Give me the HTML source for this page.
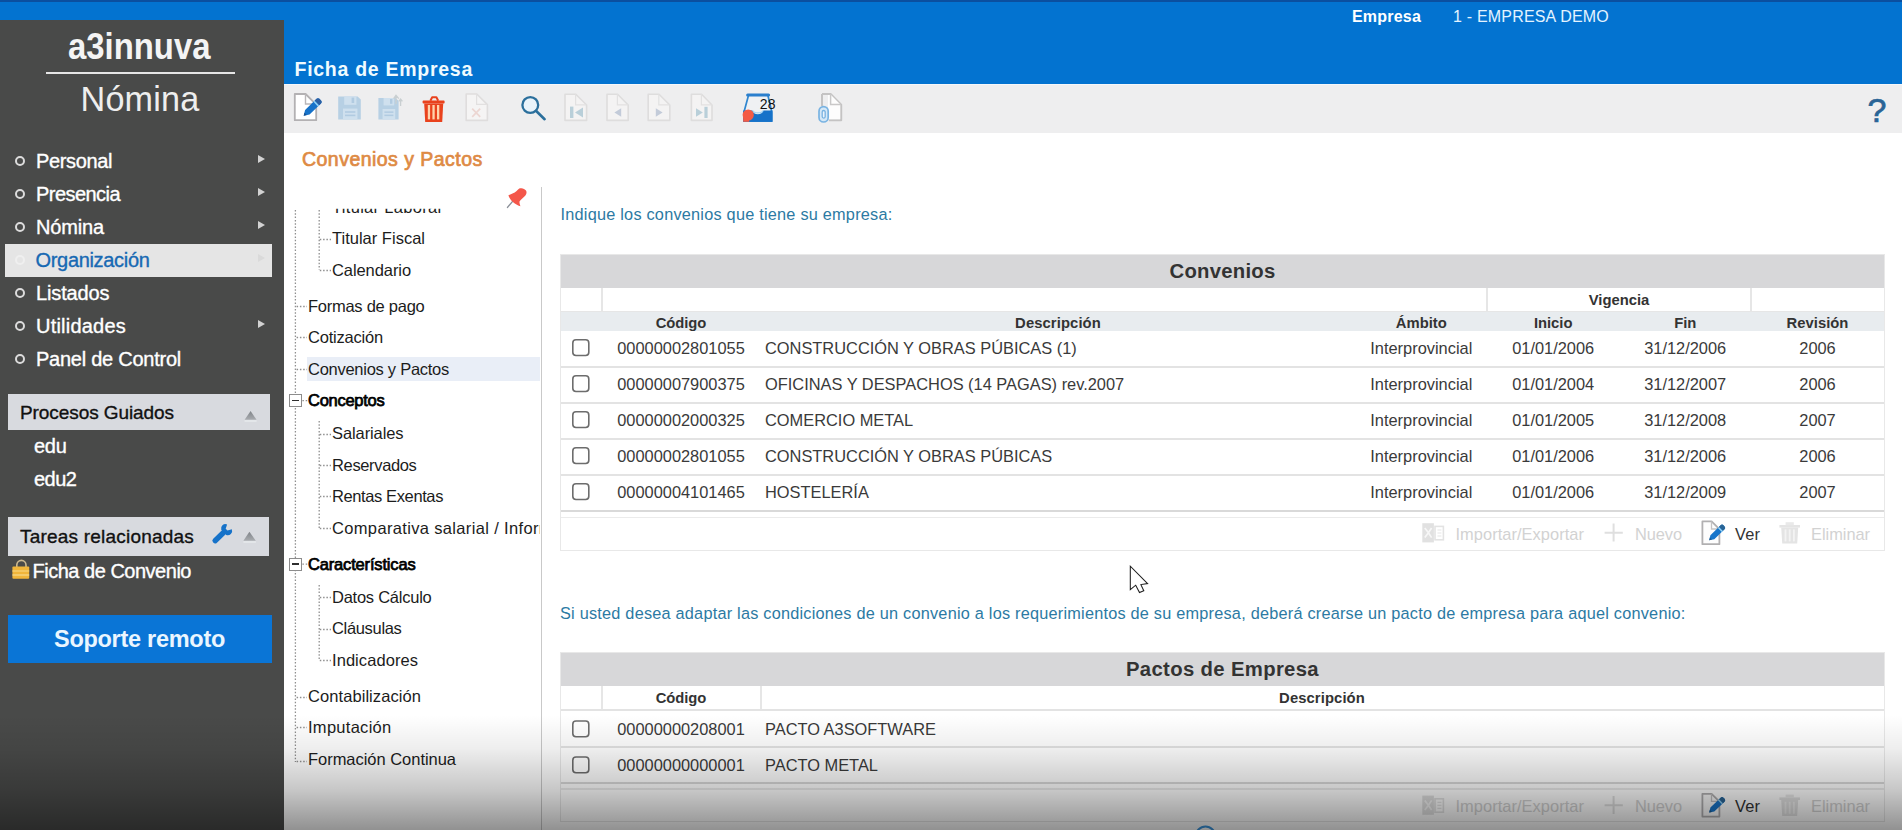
<!DOCTYPE html>
<html lang="es">
<head>
<meta charset="utf-8">
<title>a3innuva Nómina - Ficha de Empresa</title>
<style>
html,body{margin:0;padding:0;background:#fff;}
body{width:1902px;height:830px;overflow:hidden;font-family:"Liberation Sans",sans-serif;}
#app{position:relative;width:1902px;height:830px;overflow:hidden;background:#fff;}
.a{position:absolute;}
.t{position:absolute;white-space:nowrap;margin:0;padding:0;}
.med{-webkit-text-stroke:0.35px currentColor;}
.med2{-webkit-text-stroke:0.7px currentColor;}
.sb{-webkit-text-stroke:0.75px currentColor;}
svg{position:absolute;overflow:visible;}
.row{position:absolute;left:561px;width:1323px;height:2px;background:#e3e3e3;}
.bul{position:absolute;left:15px;width:6.4px;height:6.4px;border:2px solid #dcdcdc;border-radius:50%;}
.arr{position:absolute;left:258.2px;width:0;height:0;border-top:4.6px solid transparent;border-bottom:4.6px solid transparent;border-left:7px solid #d2d2d2;}
.exp{position:absolute;left:289.2px;width:10.4px;height:10.8px;border:1.1px solid #8c8c8c;background:#fff;}
.exp:after{content:"";position:absolute;left:1.4px;top:4.4px;width:7.6px;height:1.9px;background:#2e2e2e;}
</style>
</head>
<body>
<div id="app">
<!-- top blue header -->
<div class="a" style="left:0;top:0;width:1902px;height:83.6px;background:#0373d0;"></div>
<div class="a" style="left:0;top:0;width:1902px;height:2px;background:#0b4f9f;"></div>
<!-- sidebar -->
<div class="a" style="left:0;top:19.5px;width:283.6px;height:811px;background:#494a49;"></div>
<div class="a" style="left:46px;top:71.5px;width:189px;height:2px;background:#e6e6e6;"></div>
<!-- menu highlight -->
<div class="a" style="left:5px;top:244px;width:267.4px;height:33px;background:#e5e5e5;"></div>
<!-- bullets -->
<div class="bul" style="top:156.0px"></div>
<div class="bul" style="top:189.0px"></div>
<div class="bul" style="top:222.0px"></div>
<div class="bul" style="top:255.0px;border-color:#efefef"></div>
<div class="bul" style="top:288.0px"></div>
<div class="bul" style="top:321.0px"></div>
<div class="bul" style="top:354.0px"></div>
<!-- submenu arrows -->
<div class="arr" style="top:155.2px"></div>
<div class="arr" style="top:188.2px"></div>
<div class="arr" style="top:221.2px"></div>
<div class="arr" style="top:254.2px;border-left-color:#dadada"></div>
<div class="arr" style="top:320.2px"></div>
<!-- section headers -->
<div class="a" style="left:8px;top:394px;width:262px;height:35.8px;background:#d8dadf;"></div>
<div class="a" style="left:8px;top:517px;width:261.2px;height:38.8px;background:#d8dadf;"></div>
<!-- support button -->
<div class="a" style="left:7.6px;top:615px;width:264.4px;height:48.3px;background:#0a75d6;"></div>
<!-- toolbar -->
<div class="a" style="left:283.6px;top:83.6px;width:1619px;height:49.2px;background:#eeeeef;"></div>
<div class="a" style="left:283.6px;top:83.6px;width:1619px;height:1.6px;background:#f5f7fa;"></div>
<!-- tree panel separator -->
<div class="a" style="left:541px;top:187px;width:1px;height:643px;background:#c9c9c9;"></div>
<!-- tree highlight -->
<div class="a" style="left:307px;top:357px;width:233px;height:23.5px;background:#e9eef7;"></div>
<!-- tree dotted lines -->
<svg style="left:0;top:0" width="600" height="830" viewBox="0 0 600 830"><path d="M295.4 210.0 V762.0 M319.2 210.0 V270.0 M319.2 421.0 V528.0 M319.2 585.0 V660.0 M319.8 239.5 H331.0 M319.8 270.5 H331.0 M296.6 306.5 H307.0 M296.6 337.5 H307.0 M296.6 369.5 H307.0 M302.4 400.6 H308 M319.8 434.5 H331.0 M319.8 465.5 H331.0 M319.8 496.5 H331.0 M319.8 528.5 H331.0 M302.4 564.2 H308 M319.8 597.5 H331.0 M319.8 629.5 H331.0 M319.8 660.5 H331.0 M296.6 697.5 H307.0 M296.6 727.5 H307.0 M296.6 761.5 H307.0" fill="none" stroke="#8f8f8f" stroke-width="1.3" stroke-dasharray="1.5 1.8"/></svg>
<div class="exp" style="top:394.2px"></div>
<div class="exp" style="top:557.8px"></div>
<!-- TABLE 1 -->
<div class="a" style="left:560px;top:254px;width:1325px;height:296.5px;border:1px solid #e8e8e8;box-sizing:border-box;background:#fff;"></div>
<div class="a" style="left:561px;top:254.8px;width:1323px;height:32.8px;background:#d7d7d9;"></div>
<div class="a" style="left:561px;top:312.2px;width:1323px;height:18.6px;background:#e8ecef;"></div>
<div class="a" style="left:561px;top:310.7px;width:1323px;height:1.5px;background:#e6e6e6;"></div>
<div class="a" style="left:600.5px;top:287.5px;width:2px;height:23px;background:#e6e6e6;"></div>
<div class="a" style="left:1486px;top:287.5px;width:2px;height:23px;background:#e6e6e6;"></div>
<div class="a" style="left:1750.3px;top:287.5px;width:2px;height:23px;background:#e6e6e6;"></div>
<div class="row" style="top:366.0px"></div>
<div class="row" style="top:402.0px"></div>
<div class="row" style="top:438.0px"></div>
<div class="row" style="top:474.0px"></div>
<div class="row" style="top:510.0px;background:#d9d9d9"></div>
<div class="row" style="top:516.5px;height:1.5px;background:#ebebeb"></div>
<!-- TABLE 2 -->
<div class="a" style="left:560px;top:652px;width:1325px;height:170px;border:1px solid #e8e8e8;box-sizing:border-box;background:#fff;"></div>
<div class="a" style="left:561px;top:652.8px;width:1323px;height:32.8px;background:#d7d7d9;"></div>
<div class="a" style="left:600.5px;top:685.5px;width:2px;height:24px;background:#e6e6e6;"></div>
<div class="a" style="left:759.5px;top:685.5px;width:2px;height:24px;background:#e6e6e6;"></div>
<div class="row" style="top:709.4px;"></div>
<div class="row" style="top:745.5px"></div>
<div class="row" style="top:781.5px;background:#d9d9d9"></div>
<div class="row" style="top:788px;height:1.5px;background:#ebebeb"></div>
<!-- ===== toolbar icons ===== -->
<svg style="left:0;top:0" width="1902" height="140" viewBox="0 0 1902 140">
<!-- edit: doc + pencil -->
<path d="M294.8 94 H305.6 L316.2 104.6 V120.2 H294.8 Z" fill="#fff" stroke="#b3b1b3" stroke-width="1.8" stroke-linejoin="round"/>
<path d="M305.5 94 V104 H315.6" fill="none" stroke="#b9b7b9" stroke-width="1.4"/>
<g transform="translate(303.7 115.7) rotate(-44)">
<path d="M0 0 L5 -3.2 H21 a2 2 0 0 1 2 2 V1.2 a2 2 0 0 1 -2 2 H5 Z" fill="#1672c9"/>
<path d="M18.4 -3.2 H21 a2 2 0 0 1 2 2 V1.2 a2 2 0 0 1 -2 2 H18.4 Z" fill="#2b5fa3"/>
<rect x="16.6" y="-3.2" width="1.6" height="6.4" fill="#8fd0f5"/>
<path d="M0 0 L2.6 -1.7 V1.7 Z" fill="#174f8e"/>
</g>
<!-- save (disabled) -->
<g fill="#b7d0e4">
<path d="M338.2 96.4 H357.6 L360.8 99.6 V119.4 H338.2 Z"/>
</g>
<rect x="344.2" y="96.4" width="12.2" height="8.4" fill="#cfe0ee"/>
<rect x="351.6" y="97.6" width="2.6" height="5.4" fill="#b1cbe1"/>
<rect x="343" y="108.6" width="14.4" height="10.8" fill="#cfe0ee"/>
<rect x="345" y="111.2" width="10.4" height="1.6" fill="#b1cbe1"/>
<rect x="345" y="114.6" width="10.4" height="1.6" fill="#b1cbe1"/>
<!-- save all (disabled) -->
<path d="M378.4 98 H395.6 L398.6 101 V119.6 H378.4 Z" fill="#b7d0e4"/>
<rect x="383.6" y="98" width="10.6" height="7.4" fill="#cfe0ee"/>
<rect x="390" y="99" width="2.4" height="4.8" fill="#b1cbe1"/>
<rect x="382.6" y="109" width="12.6" height="10.6" fill="#cfe0ee"/>
<rect x="384.4" y="111.4" width="9" height="1.5" fill="#b1cbe1"/>
<rect x="384.4" y="114.6" width="9" height="1.5" fill="#b1cbe1"/>
<path d="M396 104 V96.5 M393.6 98.6 L396 95.4 L398.8 98.6 M400.6 106 V99.5 M398.8 101.4 L400.6 99 L402.4 101.4" fill="none" stroke="#c9cfd1" stroke-width="1.3"/>
<!-- trash (red) -->
<path d="M424.2 103.4 H443.2 L442.2 122 H425.2 Z" fill="#e9421d"/>
<rect x="422.6" y="100.6" width="22" height="3" rx="0.8" fill="#e9421d"/>
<path d="M430.4 100.8 L432.2 97.2 H436.4 L438.2 100.8" fill="none" stroke="#e9421d" stroke-width="2" stroke-linejoin="round"/>
<rect x="427.8" y="105" width="2.3" height="14.4" fill="#ffd3ac"/>
<rect x="432.4" y="105" width="2.3" height="14.4" fill="#ffd3ac"/>
<rect x="437" y="105" width="2.3" height="14.4" fill="#ffd3ac"/>
<!-- doc with x (disabled) -->
<path d="M466.2 94 H476.8 L487.4 104.6 V120.4 H466.2 Z" fill="#f5f4f4" stroke="#dfdddd" stroke-width="1.6" stroke-linejoin="round"/>
<path d="M476.6 94 V104.4 H487" fill="none" stroke="#e2e0e0" stroke-width="1.2"/>
<path d="M472.2 108.6 L480.2 116.8 M480.2 108.6 L472.2 116.8" stroke="#ecd6d2" stroke-width="1.7" fill="none"/>
<!-- search -->
<circle cx="530.3" cy="105" r="7.9" fill="#e9f3fa" stroke="#2b6f9c" stroke-width="2.3"/>
<path d="M536.2 111 L544.6 119.2" stroke="#2b6f9c" stroke-width="2.6" stroke-linecap="round"/>
<!-- nav docs (disabled) -->
<g fill="#f4f3f3" stroke="#dedddd" stroke-width="1.6" stroke-linejoin="round">
<path d="M565 94.2 H575.8 L586.6 105 V120.4 H565 Z"/>
<path d="M607 94.2 H617.6 L628.2 105 V120.4 H607 Z"/>
<path d="M648.2 94.2 H659 L669.8 105 V120.4 H648.2 Z"/>
<path d="M691.4 94.2 H701.6 L712 105 V120.4 H691.4 Z"/>
</g>
<g fill="none" stroke="#e2e1e1" stroke-width="1.2">
<path d="M575.6 94.2 V104.8 H586.4"/><path d="M617.4 94.2 V104.8 H628"/><path d="M658.8 94.2 V104.8 H669.6"/><path d="M701.4 94.2 V104.8 H711.8"/>
</g>
<g fill="#b9cfd9">
<rect x="570" y="106.6" width="3.4" height="11.4"/><path d="M583 107.6 V117.4 L575 112.5 Z"/>
<path d="M621.2 108.2 V116.8 L614.4 112.5 Z" fill="#c3cbd9"/>
<path d="M655.8 108.2 V116.8 L662.6 112.5 Z" fill="#c3cbd9"/>
<path d="M696 108.2 V116.8 L702.8 112.5 Z"/><rect x="704.4" y="106.8" width="3.2" height="11.2"/>
</g>
<!-- inbox -->
<path d="M748.6 95 H767.8 L771.8 112 V121.2 H744 V112 Z" fill="#eff1f3" stroke="#2f86cf" stroke-width="1.7" stroke-linejoin="round"/>
<path d="M747.6 95 H768.6" stroke="#2a7fcd" stroke-width="3" stroke-linecap="round"/>
<path d="M743.2 110.6 H752.4 C752.8 115.4 762.8 115.4 763.4 110.6 H772.4 V121.8 H743.2 Z" fill="#1672c9"/>
<path d="M752.6 110.4 C754 113.6 761.6 113.6 763.2 110.4" fill="none" stroke="#9fd2f4" stroke-width="1.2"/>
<circle cx="748.2" cy="115" r="5.6" fill="#f45b45"/>
<rect x="743.2" y="115" width="6" height="6.8" fill="#f45b45"/>
<!-- attachment doc -->
<path d="M822 94 H830.6 L841.2 104.6 V120.2 H829" fill="none" stroke="#c4c3c3" stroke-width="2" stroke-linejoin="round"/>
<path d="M822 94 V106" fill="none" stroke="#c4c3c3" stroke-width="2"/>
<path d="M831 95 L840.2 104.2 V119.2 H828 V95 Z" fill="#fdfdfd"/>
<path d="M830.6 94 V104.6 H841" fill="none" stroke="#c9c8c8" stroke-width="1.5"/>
<path d="M819 111.2 a4.6 4.6 0 0 1 9.2 0 V117.4 a4.6 4.6 0 0 1 -9.2 0 Z" fill="#d5e8f7" stroke="#79b3e2" stroke-width="1.7"/>
<path d="M822.2 112 a1.5 1.5 0 0 1 3 0 V116.6 a1.5 1.5 0 0 1 -3 0 Z" fill="#eaf3fb" stroke="#79b3e2" stroke-width="1.3"/>
</svg>
<!-- ===== small icons ===== -->
<svg style="left:0;top:0" width="1902" height="830" viewBox="0 0 1902 830">
<defs>
<linearGradient id="tg" x1="0" y1="0" x2="0" y2="1"><stop offset="0" stop-color="#7f8388"/><stop offset="1" stop-color="#a9acb0"/></linearGradient>
</defs>
<!-- collapse arrows on section headers -->
<path d="M250.6 411 L256.6 419.8 H244.6 Z" fill="url(#tg)"/>
<path d="M244.6 421 H256.6" stroke="#e9ebee" stroke-width="1.4"/>
<path d="M249.4 531.8 L255.8 540.8 H243.4 Z" fill="url(#tg)"/>
<path d="M243.4 542 H255.8" stroke="#e9ebee" stroke-width="1.4"/>
<!-- wrench -->
<g transform="translate(214.8 541) rotate(-44)">
<rect x="-2.2" y="-2.7" width="17" height="5.4" rx="2.6" fill="#1672c9"/>
<path d="M12.4 -3.6 a4.4 4.4 0 0 1 8 0.2 L16.4 -1.3 V1.3 L20.4 3.4 a4.4 4.4 0 0 1 -8 0.2 Z" fill="#1672c9"/>
</g>
<!-- lock icon -->
<path d="M16.8 567 V565 a4.6 4.6 0 0 1 9.2 0 V567" fill="none" stroke="#cdb98f" stroke-width="1.6"/>
<rect x="12.4" y="566.4" width="16.8" height="12.4" rx="1" fill="#f0b53a"/>
<rect x="12.4" y="570.4" width="16.8" height="1.2" fill="#f7d27a"/>
<rect x="12.4" y="574.4" width="16.8" height="1.2" fill="#f7d98c"/>
<!-- pin -->
<path d="M507.5 207.4 L512.4 201.6" stroke="#8a8f98" stroke-width="1.4" stroke-linecap="round"/>
<path d="M508.4 195.2 C510.6 194.6 514.4 193 516.6 191 C518 189.6 518.8 188.6 520.2 188.3 C522.4 187.8 524.8 188.8 526 190.6 C527 192.2 526.6 194 525.4 195.4 C523.6 197.6 520.8 199.4 519.6 201.2 C519.2 203 520 204.6 520.4 206.2 C517.6 205.6 514.2 203.6 512.4 201.6 C510.6 199.8 509 197.4 508.4 195.2 Z" fill="#f4574a"/>
<!-- table toolbar icons (two toolbars: dy=0 and dy=272.4) -->
<g>
<rect x="1422.3" y="523.2" width="11.6" height="19.2" fill="#e1e1e1"/>
<path d="M1424.8 528 L1428.4 532.8 L1424.8 537.6 M1431.6 528 L1428.4 532.8 L1431.6 537.6" stroke="#f7f7f7" stroke-width="1.7" fill="none"/>
<rect x="1435" y="526.4" width="8.4" height="13.4" fill="none" stroke="#e3e3e3" stroke-width="1.6"/>
<path d="M1437.4 530 H1441.4 M1437.4 533 H1441.4 M1437.4 536 H1441.4" stroke="#e6e6e6" stroke-width="1.2"/>
<path d="M1604.6 532.8 H1622.8 M1613.6 523.6 V541.6" stroke="#dfdfdf" stroke-width="2"/>
<path d="M1702.4 521.4 H1711.6 L1719.4 529.2 V544.2 H1702.4 Z" fill="#fdfdfd" stroke="#b1b0b1" stroke-width="1.8" stroke-linejoin="round"/>
<path d="M1711.5 521.4 V529 H1719" fill="none" stroke="#c4c3c4" stroke-width="1.3"/>
<g transform="translate(1709.2 540.2) rotate(-44)">
<path d="M0 0 L4.4 -2.8 H18.6 a2 2 0 0 1 2 2 V0.8 a2 2 0 0 1 -2 2 H4.4 Z" fill="#1876cb"/>
<path d="M16.4 -2.8 H18.6 a2 2 0 0 1 2 2 V0.8 a2 2 0 0 1 -2 2 H16.4 Z" fill="#2a6596"/>
<rect x="14.8" y="-2.8" width="1.4" height="5.6" fill="#9ad6f6"/>
<path d="M0 0 L2.4 -1.5 V1.5 Z" fill="#1c5a90"/>
</g>
<path d="M1781.2 527.6 H1798.2 L1797.2 543.6 H1782.2 Z" fill="#e4e4e4"/>
<rect x="1779.4" y="525" width="20.6" height="2.6" fill="#e4e4e4"/>
<rect x="1785.6" y="522.2" width="8.2" height="3" fill="#e9e9e9"/>
<rect x="1784.6" y="529.4" width="1.8" height="12" fill="#f3f3f3"/>
<rect x="1788.8" y="529.4" width="1.8" height="12" fill="#f3f3f3"/>
<rect x="1793" y="529.4" width="1.8" height="12" fill="#f3f3f3"/>
</g>
<g transform="translate(0 272.4)">
<rect x="1422.3" y="523.2" width="11.6" height="19.2" fill="#e1e1e1"/>
<path d="M1424.8 528 L1428.4 532.8 L1424.8 537.6 M1431.6 528 L1428.4 532.8 L1431.6 537.6" stroke="#f7f7f7" stroke-width="1.7" fill="none"/>
<rect x="1435" y="526.4" width="8.4" height="13.4" fill="none" stroke="#e3e3e3" stroke-width="1.6"/>
<path d="M1437.4 530 H1441.4 M1437.4 533 H1441.4 M1437.4 536 H1441.4" stroke="#e6e6e6" stroke-width="1.2"/>
<path d="M1604.6 532.8 H1622.8 M1613.6 523.6 V541.6" stroke="#dfdfdf" stroke-width="2"/>
<path d="M1702.4 521.4 H1711.6 L1719.4 529.2 V544.2 H1702.4 Z" fill="#fdfdfd" stroke="#b1b0b1" stroke-width="1.8" stroke-linejoin="round"/>
<path d="M1711.5 521.4 V529 H1719" fill="none" stroke="#c4c3c4" stroke-width="1.3"/>
<g transform="translate(1709.2 540.2) rotate(-44)">
<path d="M0 0 L4.4 -2.8 H18.6 a2 2 0 0 1 2 2 V0.8 a2 2 0 0 1 -2 2 H4.4 Z" fill="#1876cb"/>
<path d="M16.4 -2.8 H18.6 a2 2 0 0 1 2 2 V0.8 a2 2 0 0 1 -2 2 H16.4 Z" fill="#2a6596"/>
<rect x="14.8" y="-2.8" width="1.4" height="5.6" fill="#9ad6f6"/>
<path d="M0 0 L2.4 -1.5 V1.5 Z" fill="#1c5a90"/>
</g>
<path d="M1781.2 527.6 H1798.2 L1797.2 543.6 H1782.2 Z" fill="#e4e4e4"/>
<rect x="1779.4" y="525" width="20.6" height="2.6" fill="#e4e4e4"/>
<rect x="1785.6" y="522.2" width="8.2" height="3" fill="#e9e9e9"/>
<rect x="1784.6" y="529.4" width="1.8" height="12" fill="#f3f3f3"/>
<rect x="1788.8" y="529.4" width="1.8" height="12" fill="#f3f3f3"/>
<rect x="1793" y="529.4" width="1.8" height="12" fill="#f3f3f3"/>
</g>
<!-- checkboxes -->
<g fill="#fff" stroke="#6d6d6d" stroke-width="1.6"><rect x="572.8" y="339.8" width="16" height="15.7" rx="3.2"/><rect x="572.8" y="375.8" width="16" height="15.7" rx="3.2"/><rect x="572.8" y="411.8" width="16" height="15.7" rx="3.2"/><rect x="572.8" y="447.8" width="16" height="15.7" rx="3.2"/><rect x="572.8" y="483.8" width="16" height="15.7" rx="3.2"/><rect x="572.8" y="721.0" width="16" height="15.7" rx="3.2"/><rect x="572.8" y="757.0" width="16" height="15.7" rx="3.2"/></g>
<!-- spinner arc peeking at bottom -->
<circle cx="1205.5" cy="836" r="9.6" fill="none" stroke="#3c97e0" stroke-width="2"/>
</svg>

<!-- text -->
<div class="t " style="top:24.01px;font-size:36px;line-height:45px;color:#f4f4f4;font-weight:bold;transform:scaleX(0.9131);transform-origin:0 0;left:68.00px;">a3innuva</div>
<div class="t " style="top:78.01px;font-size:34.2px;line-height:43px;color:#eeeeee;letter-spacing:0.198px;left:80.50px;">Nómina</div>
<div class="t med" style="top:148.01px;font-size:20px;line-height:26px;color:#ffffff;letter-spacing:-0.367px;left:36.00px;">Personal</div>
<div class="t med" style="top:181.01px;font-size:20px;line-height:26px;color:#ffffff;letter-spacing:-0.549px;left:36.00px;">Presencia</div>
<div class="t med" style="top:214.01px;font-size:20px;line-height:26px;color:#ffffff;letter-spacing:-0.154px;left:36.00px;">Nómina</div>
<div class="t med" style="top:247.01px;font-size:20px;line-height:26px;color:#1769b3;letter-spacing:-0.320px;left:35.50px;">Organización</div>
<div class="t med" style="top:280.01px;font-size:20px;line-height:26px;color:#ffffff;letter-spacing:-0.125px;left:36.00px;">Listados</div>
<div class="t med" style="top:313.01px;font-size:20px;line-height:26px;color:#ffffff;letter-spacing:0.217px;left:36.00px;">Utilidades</div>
<div class="t med" style="top:346.01px;font-size:20px;line-height:26px;color:#ffffff;letter-spacing:-0.249px;left:36.00px;">Panel de Control</div>
<div class="t med" style="top:400.01px;font-size:19px;line-height:25px;color:#111111;letter-spacing:-0.078px;left:20.00px;">Procesos Guiados</div>
<div class="t med" style="top:433.01px;font-size:20px;line-height:26px;color:#ffffff;letter-spacing:-0.292px;left:34.00px;">edu</div>
<div class="t med" style="top:466.01px;font-size:20px;line-height:26px;color:#ffffff;letter-spacing:-0.500px;left:34.00px;">edu2</div>
<div class="t med" style="top:524.00px;font-size:19px;line-height:25px;color:#111111;letter-spacing:0.208px;left:20.00px;">Tareas relacionadas</div>
<div class="t med" style="top:558.01px;font-size:20px;line-height:26px;color:#ffffff;letter-spacing:-0.487px;left:32.50px;">Ficha de Convenio</div>
<div class="t " style="top:624.00px;font-size:23.5px;line-height:30px;color:#eaf6ff;font-weight:bold;letter-spacing:-0.283px;left:54.00px;">Soporte remoto</div>
<div class="t " style="top:57.01px;font-size:19.5px;line-height:25px;color:#f0fbff;font-weight:bold;letter-spacing:0.725px;left:294.50px;">Ficha de Empresa</div>
<div class="t " style="top:6.00px;font-size:16px;line-height:21px;color:#ffffff;font-weight:bold;letter-spacing:0.201px;left:1352.00px;">Empresa</div>
<div class="t " style="top:6.00px;font-size:16px;line-height:21px;color:#e4f3ff;letter-spacing:0.192px;left:1453.00px;">1 - EMPRESA DEMO</div>
<div class="t med2" style="top:89.00px;font-size:34px;line-height:43px;color:#2a6496;left:1867.60px;">?</div>
<div class="t " style="top:95.01px;font-size:14px;line-height:19px;color:#111111;letter-spacing:0.211px;left:759.70px;">28</div>
<div class="t med2" style="top:147.01px;font-size:19.5px;line-height:25px;color:#de8a44;letter-spacing:0.464px;left:302.00px;">Convenios y Pactos</div>
<div class="t " style="top:203.01px;font-size:16.3px;line-height:22px;color:#2c7aa3;letter-spacing:0.227px;left:560.50px;">Indique los convenios que tiene su empresa:</div>
<div class="t " style="top:602.01px;font-size:16.3px;line-height:22px;color:#2c7aa3;letter-spacing:0.222px;left:560.00px;">Si usted desea adaptar las condiciones de un convenio a los requerimientos de su empresa, deberá crearse un pacto de empresa para aquel convenio:</div>
<div class="t " style="top:258.00px;font-size:20.3px;line-height:26px;color:#333333;font-weight:bold;letter-spacing:0.257px;left:922.50px;width:600px;text-align:center;"><span>Convenios</span></div>
<div class="t " style="top:290.00px;font-size:14.8px;line-height:20px;color:#333333;font-weight:bold;letter-spacing:-0.024px;left:1319.00px;width:600px;text-align:center;"><span>Vigencia</span></div>
<div class="t " style="top:313.00px;font-size:14.8px;line-height:20px;color:#333333;font-weight:bold;letter-spacing:-0.034px;left:381.00px;width:600px;text-align:center;"><span>Código</span></div>
<div class="t " style="top:313.00px;font-size:14.8px;line-height:20px;color:#333333;font-weight:bold;letter-spacing:0.100px;left:758.00px;width:600px;text-align:center;"><span>Descripción</span></div>
<div class="t " style="top:313.00px;font-size:14.8px;line-height:20px;color:#333333;font-weight:bold;letter-spacing:0.005px;left:1121.30px;width:600px;text-align:center;"><span>Ámbito</span></div>
<div class="t " style="top:313.00px;font-size:14.8px;line-height:20px;color:#333333;font-weight:bold;letter-spacing:-0.023px;left:1253.20px;width:600px;text-align:center;"><span>Inicio</span></div>
<div class="t " style="top:313.00px;font-size:14.8px;line-height:20px;color:#333333;font-weight:bold;letter-spacing:-0.168px;left:1385.20px;width:600px;text-align:center;"><span>Fin</span></div>
<div class="t " style="top:313.00px;font-size:14.8px;line-height:20px;color:#333333;font-weight:bold;letter-spacing:0.014px;left:1517.50px;width:600px;text-align:center;"><span>Revisión</span></div>
<div class="t " style="top:337.00px;font-size:16.4px;line-height:22px;color:#3a3a3a;left:381.00px;width:600px;text-align:center;"><span>00000002801055</span></div>
<div class="t " style="top:337.00px;font-size:16.4px;line-height:22px;color:#3a3a3a;left:765.00px;">CONSTRUCCIÓN Y OBRAS PÚBICAS (1)</div>
<div class="t " style="top:337.00px;font-size:16.4px;line-height:22px;color:#3a3a3a;left:1121.30px;width:600px;text-align:center;"><span>Interprovincial</span></div>
<div class="t " style="top:337.00px;font-size:16.4px;line-height:22px;color:#3a3a3a;left:1253.20px;width:600px;text-align:center;"><span>01/01/2006</span></div>
<div class="t " style="top:337.00px;font-size:16.4px;line-height:22px;color:#3a3a3a;left:1385.20px;width:600px;text-align:center;"><span>31/12/2006</span></div>
<div class="t " style="top:337.00px;font-size:16.4px;line-height:22px;color:#3a3a3a;left:1517.50px;width:600px;text-align:center;"><span>2006</span></div>
<div class="t " style="top:373.00px;font-size:16.4px;line-height:22px;color:#3a3a3a;left:381.00px;width:600px;text-align:center;"><span>00000007900375</span></div>
<div class="t " style="top:373.00px;font-size:16.4px;line-height:22px;color:#3a3a3a;left:765.00px;">OFICINAS Y DESPACHOS (14 PAGAS) rev.2007</div>
<div class="t " style="top:373.00px;font-size:16.4px;line-height:22px;color:#3a3a3a;left:1121.30px;width:600px;text-align:center;"><span>Interprovincial</span></div>
<div class="t " style="top:373.00px;font-size:16.4px;line-height:22px;color:#3a3a3a;left:1253.20px;width:600px;text-align:center;"><span>01/01/2004</span></div>
<div class="t " style="top:373.00px;font-size:16.4px;line-height:22px;color:#3a3a3a;left:1385.20px;width:600px;text-align:center;"><span>31/12/2007</span></div>
<div class="t " style="top:373.00px;font-size:16.4px;line-height:22px;color:#3a3a3a;left:1517.50px;width:600px;text-align:center;"><span>2006</span></div>
<div class="t " style="top:409.00px;font-size:16.4px;line-height:22px;color:#3a3a3a;left:381.00px;width:600px;text-align:center;"><span>00000002000325</span></div>
<div class="t " style="top:409.00px;font-size:16.4px;line-height:22px;color:#3a3a3a;left:765.00px;">COMERCIO METAL</div>
<div class="t " style="top:409.00px;font-size:16.4px;line-height:22px;color:#3a3a3a;left:1121.30px;width:600px;text-align:center;"><span>Interprovincial</span></div>
<div class="t " style="top:409.00px;font-size:16.4px;line-height:22px;color:#3a3a3a;left:1253.20px;width:600px;text-align:center;"><span>01/01/2005</span></div>
<div class="t " style="top:409.00px;font-size:16.4px;line-height:22px;color:#3a3a3a;left:1385.20px;width:600px;text-align:center;"><span>31/12/2008</span></div>
<div class="t " style="top:409.00px;font-size:16.4px;line-height:22px;color:#3a3a3a;left:1517.50px;width:600px;text-align:center;"><span>2007</span></div>
<div class="t " style="top:445.00px;font-size:16.4px;line-height:22px;color:#3a3a3a;left:381.00px;width:600px;text-align:center;"><span>00000002801055</span></div>
<div class="t " style="top:445.00px;font-size:16.4px;line-height:22px;color:#3a3a3a;left:765.00px;">CONSTRUCCIÓN Y OBRAS PÚBICAS</div>
<div class="t " style="top:445.00px;font-size:16.4px;line-height:22px;color:#3a3a3a;left:1121.30px;width:600px;text-align:center;"><span>Interprovincial</span></div>
<div class="t " style="top:445.00px;font-size:16.4px;line-height:22px;color:#3a3a3a;left:1253.20px;width:600px;text-align:center;"><span>01/01/2006</span></div>
<div class="t " style="top:445.00px;font-size:16.4px;line-height:22px;color:#3a3a3a;left:1385.20px;width:600px;text-align:center;"><span>31/12/2006</span></div>
<div class="t " style="top:445.00px;font-size:16.4px;line-height:22px;color:#3a3a3a;left:1517.50px;width:600px;text-align:center;"><span>2006</span></div>
<div class="t " style="top:481.00px;font-size:16.4px;line-height:22px;color:#3a3a3a;left:381.00px;width:600px;text-align:center;"><span>00000004101465</span></div>
<div class="t " style="top:481.00px;font-size:16.4px;line-height:22px;color:#3a3a3a;left:765.00px;">HOSTELERÍA</div>
<div class="t " style="top:481.00px;font-size:16.4px;line-height:22px;color:#3a3a3a;left:1121.30px;width:600px;text-align:center;"><span>Interprovincial</span></div>
<div class="t " style="top:481.00px;font-size:16.4px;line-height:22px;color:#3a3a3a;left:1253.20px;width:600px;text-align:center;"><span>01/01/2006</span></div>
<div class="t " style="top:481.00px;font-size:16.4px;line-height:22px;color:#3a3a3a;left:1385.20px;width:600px;text-align:center;"><span>31/12/2009</span></div>
<div class="t " style="top:481.00px;font-size:16.4px;line-height:22px;color:#3a3a3a;left:1517.50px;width:600px;text-align:center;"><span>2007</span></div>
<div class="t " style="top:523.00px;font-size:16.4px;line-height:22px;color:#d2d2d2;letter-spacing:0.057px;left:1455.50px;">Importar/Exportar</div>
<div class="t " style="top:523.00px;font-size:16.4px;line-height:22px;color:#d2d2d2;letter-spacing:-0.078px;left:1635.00px;">Nuevo</div>
<div class="t " style="top:523.00px;font-size:16.4px;line-height:22px;color:#333333;letter-spacing:0.130px;left:1735.00px;">Ver</div>
<div class="t " style="top:523.00px;font-size:16.4px;line-height:22px;color:#d2d2d2;letter-spacing:-0.025px;left:1811.00px;">Eliminar</div>
<div class="t " style="top:795.00px;font-size:16.4px;line-height:22px;color:#d2d2d2;letter-spacing:0.057px;left:1455.50px;">Importar/Exportar</div>
<div class="t " style="top:795.00px;font-size:16.4px;line-height:22px;color:#d2d2d2;letter-spacing:-0.078px;left:1635.00px;">Nuevo</div>
<div class="t " style="top:795.00px;font-size:16.4px;line-height:22px;color:#333333;letter-spacing:0.130px;left:1735.00px;">Ver</div>
<div class="t " style="top:795.00px;font-size:16.4px;line-height:22px;color:#d2d2d2;letter-spacing:-0.025px;left:1811.00px;">Eliminar</div>
<div class="t " style="top:656.00px;font-size:20.3px;line-height:26px;color:#333333;font-weight:bold;letter-spacing:0.345px;left:922.50px;width:600px;text-align:center;"><span>Pactos de Empresa</span></div>
<div class="t " style="top:688.01px;font-size:14.8px;line-height:20px;color:#333333;font-weight:bold;letter-spacing:-0.034px;left:381.00px;width:600px;text-align:center;"><span>Código</span></div>
<div class="t " style="top:688.01px;font-size:14.8px;line-height:20px;color:#333333;font-weight:bold;letter-spacing:0.100px;left:1022.00px;width:600px;text-align:center;"><span>Descripción</span></div>
<div class="t " style="top:718.00px;font-size:16.4px;line-height:22px;color:#3a3a3a;left:381.00px;width:600px;text-align:center;"><span>00000000208001</span></div>
<div class="t " style="top:718.00px;font-size:16.4px;line-height:22px;color:#3a3a3a;left:765.00px;">PACTO A3SOFTWARE</div>
<div class="t " style="top:754.01px;font-size:16.4px;line-height:22px;color:#3a3a3a;left:381.00px;width:600px;text-align:center;"><span>00000000000001</span></div>
<div class="t " style="top:754.01px;font-size:16.4px;line-height:22px;color:#3a3a3a;left:765.00px;">PACTO METAL</div>
<div class="t " style="top:196.01px;font-size:16.5px;line-height:22px;color:#1c1c1c;letter-spacing:0.309px;left:332.00px;clip-path:inset(12.69px 0 0 0);">Titular Laboral</div>
<div class="t " style="top:227.00px;font-size:16.5px;line-height:22px;color:#1c1c1c;letter-spacing:0.007px;left:332.00px;">Titular Fiscal</div>
<div class="t " style="top:259.02px;font-size:16.5px;line-height:22px;color:#1c1c1c;letter-spacing:-0.081px;left:332.00px;">Calendario</div>
<div class="t " style="top:295.02px;font-size:16.5px;line-height:22px;color:#1c1c1c;letter-spacing:-0.261px;left:308.00px;">Formas de pago</div>
<div class="t " style="top:326.02px;font-size:16.5px;line-height:22px;color:#1c1c1c;letter-spacing:-0.205px;left:308.00px;">Cotización</div>
<div class="t " style="top:358.02px;font-size:16.5px;line-height:22px;color:#1c1c1c;letter-spacing:-0.268px;left:308.00px;">Convenios y Pactos</div>
<div class="t sb" style="top:389.02px;font-size:16.5px;line-height:22px;color:#000;letter-spacing:-0.266px;left:308.00px;">Conceptos</div>
<div class="t " style="top:422.02px;font-size:16.5px;line-height:22px;color:#1c1c1c;letter-spacing:-0.097px;left:332.00px;">Salariales</div>
<div class="t " style="top:454.02px;font-size:16.5px;line-height:22px;color:#1c1c1c;letter-spacing:-0.355px;left:332.00px;">Reservados</div>
<div class="t " style="top:485.02px;font-size:16.5px;line-height:22px;color:#1c1c1c;letter-spacing:-0.392px;left:332.00px;">Rentas Exentas</div>
<div class="t " style="top:517.02px;font-size:16.5px;line-height:22px;color:#1c1c1c;letter-spacing:0.342px;left:332.00px;clip-path:inset(0 54px 0 0);">Comparativa salarial / Información</div>
<div class="t sb" style="top:553.02px;font-size:16.5px;line-height:22px;color:#000;letter-spacing:-0.169px;left:308.00px;">Características</div>
<div class="t " style="top:586.02px;font-size:16.5px;line-height:22px;color:#1c1c1c;letter-spacing:-0.248px;left:332.00px;">Datos Cálculo</div>
<div class="t " style="top:617.02px;font-size:16.5px;line-height:22px;color:#1c1c1c;letter-spacing:-0.330px;left:332.00px;">Cláusulas</div>
<div class="t " style="top:649.02px;font-size:16.5px;line-height:22px;color:#1c1c1c;letter-spacing:0.062px;left:332.00px;">Indicadores</div>
<div class="t " style="top:685.02px;font-size:16.5px;line-height:22px;color:#1c1c1c;letter-spacing:0.073px;left:308.00px;">Contabilización</div>
<div class="t " style="top:716.02px;font-size:16.5px;line-height:22px;color:#1c1c1c;letter-spacing:0.278px;left:308.00px;">Imputación</div>
<div class="t " style="top:748.02px;font-size:16.5px;line-height:22px;color:#1c1c1c;letter-spacing:-0.032px;left:308.00px;">Formación Continua</div>
<!-- bottom video-player shade -->
<div class="a" style="left:0;top:715px;width:1902px;height:115px;background:linear-gradient(to bottom,rgba(0,0,0,0) 0%,rgba(0,0,0,0.07) 30%,rgba(0,0,0,0.22) 65%,rgba(0,0,0,0.43) 100%);"></div>
<!-- mouse cursor -->
<svg style="left:0;top:0" width="1902" height="830" viewBox="0 0 1902 830"><path d="M1130.3 566.2 L1130.3 589.6 L1135.7 585.2 L1139.5 592.6 L1143.8 590.8 L1140.9 584.6 L1147.6 583.6 Z" fill="#fff" stroke="#1e1e1e" stroke-width="1.05" stroke-linejoin="miter"/></svg>

</div>
</body>
</html>
